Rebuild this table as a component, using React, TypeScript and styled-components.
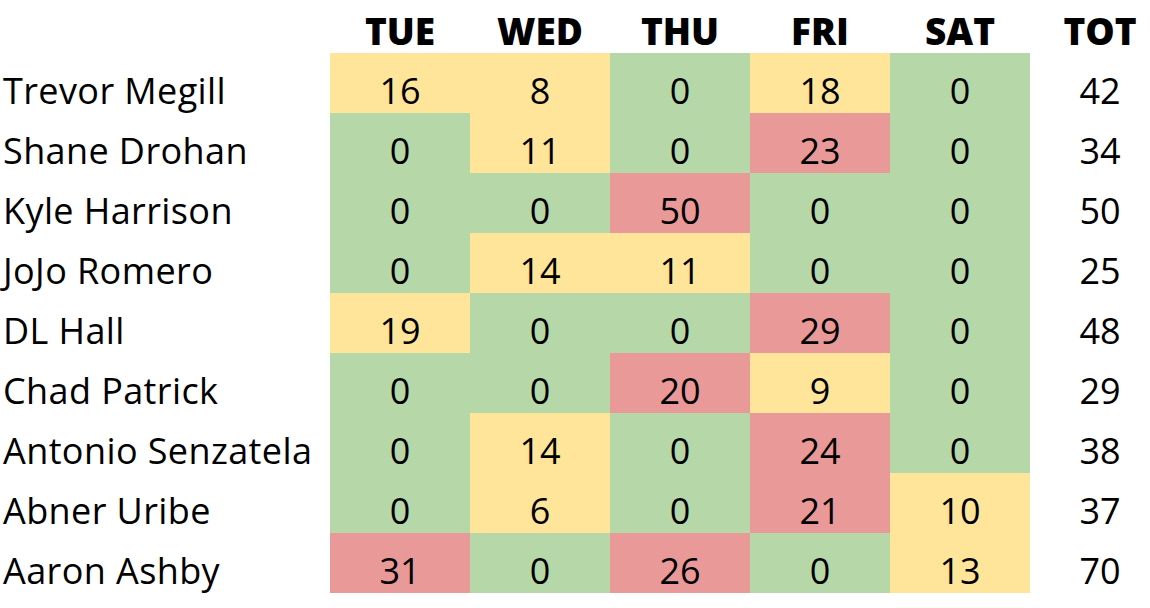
import React from "react";
import styled, { createGlobalStyle } from "styled-components";

const Global = createGlobalStyle`
  html, body { margin: 0; padding: 0; background: #fff; overflow: hidden; }
  body { font-family: "Open Sans", "Noto Sans", sans-serif; color: #000; }
`;

const Table = styled.div`
  display: grid;
  grid-template-columns: 330px repeat(5, 140px) 140px;
  grid-template-rows: 53px repeat(9, 60px);
  width: 1170px;
`;

const HeadCell = styled.div`
  display: flex;
  align-items: flex-end;
  justify-content: center;
  font-weight: 800;
  font-size: 37px;
  line-height: 1;
  padding-bottom: 4px;
`;

const NameCell = styled.div`
  display: flex;
  align-items: flex-end;
  padding-left: 3px;
  padding-bottom: 4px;
  font-size: 36px;
  line-height: 1;
  white-space: nowrap;
  letter-spacing: 0.4px;
`;

const colors = { g: "#b6d7a8", y: "#ffe599", r: "#ea9999" } as const;

const ValueCell = styled.div<{ $tone?: keyof typeof colors }>`
  display: flex;
  align-items: flex-end;
  justify-content: center;
  padding-bottom: 4px;
  font-size: 36px;
  line-height: 1;
  background: ${(p) => (p.$tone ? colors[p.$tone] : "transparent")};
`;

const days = ["TUE", "WED", "THU", "FRI", "SAT"];

const rows: [string, number[], number][] = [
  ["Trevor Megill", [16, 8, 0, 18, 0], 42],
  ["Shane Drohan", [0, 11, 0, 23, 0], 34],
  ["Kyle Harrison", [0, 0, 50, 0, 0], 50],
  ["JoJo Romero", [0, 14, 11, 0, 0], 25],
  ["DL Hall", [19, 0, 0, 29, 0], 48],
  ["Chad Patrick", [0, 0, 20, 9, 0], 29],
  ["Antonio Senzatela", [0, 14, 0, 24, 0], 38],
  ["Abner Uribe", [0, 6, 0, 21, 10], 37],
  ["Aaron Ashby", [31, 0, 26, 0, 13], 70],
];

const tone = (v: number): keyof typeof colors => (v === 0 ? "g" : v < 20 ? "y" : "r");

export default function App() {
  return (
    <>
      <Global />
      <Table>
        <div />
        {days.map((d) => (
          <HeadCell key={d}>{d}</HeadCell>
        ))}
        <HeadCell>TOT</HeadCell>
        {rows.map(([name, vals, tot]) => (
          <React.Fragment key={name}>
            <NameCell>{name}</NameCell>
            {vals.map((v, i) => (
              <ValueCell key={i} $tone={tone(v)}>
                {v}
              </ValueCell>
            ))}
            <ValueCell>{tot}</ValueCell>
          </React.Fragment>
        ))}
      </Table>
    </>
  );
}
